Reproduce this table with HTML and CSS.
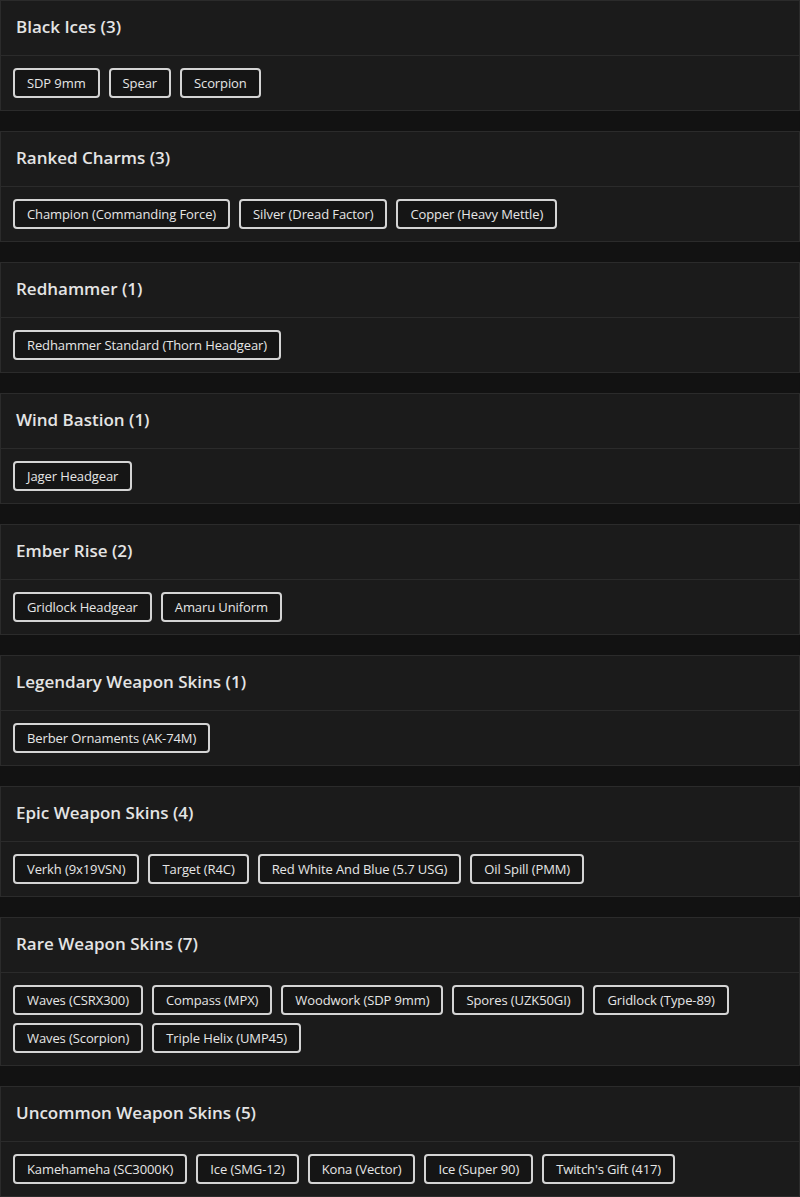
FILE: index.html
```html
<!DOCTYPE html>
<html>
<head>
<meta charset="utf-8">
<link rel="stylesheet" href="styles.css">
</head>
<body>
<div class="list">
  <section class="card">
    <div class="card-head">Black Ices (3)</div>
    <div class="card-body">
      <span class="chip">SDP 9mm</span>
      <span class="chip">Spear</span>
      <span class="chip">Scorpion</span>
    </div>
  </section>
  <section class="card">
    <div class="card-head">Ranked Charms (3)</div>
    <div class="card-body">
      <span class="chip">Champion (Commanding Force)</span>
      <span class="chip">Silver (Dread Factor)</span>
      <span class="chip">Copper (Heavy Mettle)</span>
    </div>
  </section>
  <section class="card">
    <div class="card-head">Redhammer (1)</div>
    <div class="card-body">
      <span class="chip">Redhammer Standard (Thorn Headgear)</span>
    </div>
  </section>
  <section class="card">
    <div class="card-head">Wind Bastion (1)</div>
    <div class="card-body">
      <span class="chip">Jager Headgear</span>
    </div>
  </section>
  <section class="card">
    <div class="card-head">Ember Rise (2)</div>
    <div class="card-body">
      <span class="chip">Gridlock Headgear</span>
      <span class="chip">Amaru Uniform</span>
    </div>
  </section>
  <section class="card">
    <div class="card-head">Legendary Weapon Skins (1)</div>
    <div class="card-body">
      <span class="chip">Berber Ornaments (AK-74M)</span>
    </div>
  </section>
  <section class="card">
    <div class="card-head">Epic Weapon Skins (4)</div>
    <div class="card-body">
      <span class="chip">Verkh (9x19VSN)</span>
      <span class="chip">Target (R4C)</span>
      <span class="chip">Red White And Blue (5.7 USG)</span>
      <span class="chip">Oil Spill (PMM)</span>
    </div>
  </section>
  <section class="card">
    <div class="card-head">Rare Weapon Skins (7)</div>
    <div class="card-body">
      <span class="chip">Waves (CSRX300)</span>
      <span class="chip">Compass (MPX)</span>
      <span class="chip">Woodwork (SDP 9mm)</span>
      <span class="chip">Spores (UZK50GI)</span>
      <span class="chip">Gridlock (Type-89)</span>
      <span class="chip">Waves (Scorpion)</span>
      <span class="chip">Triple Helix (UMP45)</span>
    </div>
  </section>
  <section class="card">
    <div class="card-head">Uncommon Weapon Skins (5)</div>
    <div class="card-body">
      <span class="chip">Kamehameha (SC3000K)</span>
      <span class="chip">Ice (SMG-12)</span>
      <span class="chip">Kona (Vector)</span>
      <span class="chip">Ice (Super 90)</span>
      <span class="chip">Twitch's Gift (417)</span>
    </div>
  </section>
</div>
</body>
</html>
```
FILE: styles.css
```css
html, body {
  margin: 0;
  padding: 0;
  background: #121212;
}
body {
  font-family: "Open Sans", "Noto Sans", sans-serif;
  color: #e2e2e2;
}
.list {
  display: flex;
  flex-direction: column;
  gap: 20px;
}
.card {
  background: #1b1b1b;
  border: 1px solid #2b2b2b;
}
.card-head {
  height: 55px;
  box-sizing: border-box;
  display: flex;
  align-items: center;
  padding: 0 15px 3px;
  font-size: 17px;
  font-weight: 600;
  color: #e4e4e4;
  border-bottom: 1px solid #2b2b2b;
}
.card-body {
  display: flex;
  flex-wrap: wrap;
  gap: 8px 9px;
  padding: 12px;
}
.chip {
  display: inline-block;
  border: 2px solid #d4d4d4;
  border-radius: 4px;
  padding: 5px 12px;
  line-height: 16px;
  font-size: 13px;
  letter-spacing: -0.1px;
  color: #e6e6e6;
  background: #151515;
}
```
